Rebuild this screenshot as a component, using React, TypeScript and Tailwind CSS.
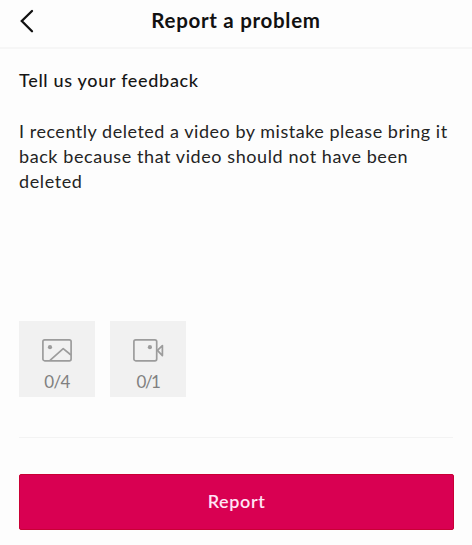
import React, { useState } from "react";

const feedbackLines = [
  { text: "I recently deleted a video by mistake please bring it", className: "tracking-[0.52px]" },
  { text: "back because that video should not have been", className: "tracking-[0.58px]" },
  { text: "deleted", className: "tracking-[0.6px]" },
];

function BackIcon() {
  return (
    <svg
      className="h-6 w-4"
      viewBox="0 0 16 24"
      fill="none"
      stroke="#111111"
      strokeWidth="2.3"
      strokeLinecap="round"
      strokeLinejoin="miter"
    >
      <path d="M13 2 2.8 12 13 22.2" />
    </svg>
  );
}

function ImageIcon() {
  return (
    <svg
      className="h-6 w-8"
      viewBox="0 0 32 24"
      fill="none"
      stroke="#9c9c9c"
      strokeWidth="1.7"
      strokeLinejoin="round"
    >
      <rect x="1.9" y="1.8" width="28.2" height="21" rx="1.8" />
      <path d="M9 22.3 22.2 10.6 30 17" />
      <circle cx="9" cy="9.2" r="2.1" fill="#9c9c9c" stroke="none" />
    </svg>
  );
}

function VideoIcon() {
  return (
    <svg
      className="h-6 w-8"
      viewBox="0 0 32 24"
      fill="none"
      stroke="#9c9c9c"
      strokeWidth="1.7"
      strokeLinejoin="round"
    >
      <rect x="1.9" y="1.8" width="22.8" height="21" rx="1.8" />
      <path d="M25.4 12.4 30.4 7.6V17.6Z" />
      <circle cx="17.9" cy="9.2" r="2.1" fill="#9c9c9c" stroke="none" />
    </svg>
  );
}

interface UploadTileProps {
  icon: React.ReactNode;
  count: string;
  countClass: string;
}

function UploadTile({ icon, count, countClass }: UploadTileProps) {
  return (
    <button
      type="button"
      className="flex h-[76px] w-[76px] flex-col items-center bg-[#f1f1f1] pt-[17px] text-[#808080]"
    >
      {icon}
      <span className={`mt-2 text-[17px] leading-6 ${countClass}`}>{count}</span>
    </button>
  );
}

export default function App() {
  const [sent, setSent] = useState(false);

  return (
    <div className="flex h-[545px] w-[472px] flex-col bg-[#fdfdfd] font-['Lato',sans-serif] text-[#161616]">
      <header className="grid h-[49px] grid-cols-[1fr_auto_1fr] items-center border-b-2 border-[#f6f6f6] pb-1.5">
        <button type="button" aria-label="Back" className="ml-[19px] w-4">
          <BackIcon />
        </button>
        <h1 className="-mt-0.5 text-[20.5px] font-bold leading-6 tracking-[0.7px] text-[#111111]">
          Report a problem
        </h1>
        <span />
      </header>

      <main className="flex flex-1 flex-col px-[19px]">
        <h2 className="mt-[19px] text-[18px] font-medium leading-6 tracking-[0.68px]">
          <span>Tell us your feedback</span>
        </h2>
        <div className="mt-[27px] h-[202px] text-[18px] leading-[25.2px] text-[#242424]">
          {feedbackLines.map((line) => (
            <p key={line.text} className="whitespace-nowrap">
              <span className={line.className}>{line.text}</span>
            </p>
          ))}
        </div>
        <div className="flex gap-[15px]">
          <UploadTile icon={<ImageIcon />} count="0/4" countClass="tracking-[-0.6px]" />
          <UploadTile icon={<VideoIcon />} count="0/1" countClass="tracking-[-1.5px]" />
        </div>
        <hr className="mt-10 border-[#f3f3f3]" />
        <button
          type="button"
          disabled={sent}
          onClick={() => setSent(true)}
          className="mt-9 h-14 w-[435px] rounded-[2px] border border-[#c90035] bg-[#d90052] pb-0.5 text-[18px] font-semibold tracking-[0.6px] text-[#ffe4f5]"
        >
          Report
        </button>
      </main>
    </div>
  );
}
